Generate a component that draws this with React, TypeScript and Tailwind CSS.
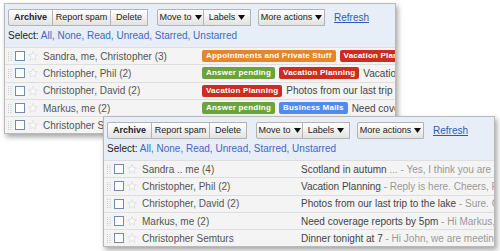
import React from "react";

type Label = { text: string; color: string };
type Row = {
  sender: string;
  labels?: Label[];
  subject?: string;
  snippet?: string;
};

const orange = "bg-[#e6852a]";
const red = "bg-[#cc2d20]";
const green = "bg-[#6aa43a]";
const blue = "bg-[#4d8df0]";

const labeledRows: Row[] = [
  {
    sender: "Sandra, me, Christopher (3)",
    labels: [
      { text: "Appointments and Private Stuff", color: orange },
      { text: "Vacation Planning", color: red },
    ],
  },
  {
    sender: "Christopher, Phil (2)",
    labels: [
      { text: "Answer pending", color: green },
      { text: "Vacation Planning", color: red },
    ],
    subject: "Vacation Planning",
    snippet: " - Reply is here. Cheers, Phil",
  },
  {
    sender: "Christopher, David (2)",
    labels: [{ text: "Vacation Planning", color: red }],
    subject: "Photos from our last trip to the lake",
    snippet: " - Sure. Cool pictures",
  },
  {
    sender: "Markus, me (2)",
    labels: [
      { text: "Answer pending", color: green },
      { text: "Business Mails", color: blue },
    ],
    subject: "Need coverage reports by 5pm",
    snippet: " - Hi Markus, sure",
  },
  { sender: "Christopher Semturs", subject: "Dinner tonight at 7" },
];

const plainRows: Row[] = [
  {
    sender: "Sandra .. me (4)",
    subject: "Scotland in autumn",
    snippet: " ... - Yes, I think you are right about the weather",
  },
  {
    sender: "Christopher, Phil (2)",
    subject: "Vacation Planning",
    snippet: " - Reply is here. Cheers, Phil",
  },
  {
    sender: "Christopher, David (2)",
    subject: "Photos from our last trip to the lake",
    snippet: " - Sure. Cool pictures",
  },
  {
    sender: "Markus, me (2)",
    subject: "Need coverage reports by 5pm",
    snippet: " - Hi Markus, sure thing",
  },
  {
    sender: "Christopher Semturs",
    subject: "Dinner tonight at 7",
    snippet: " - Hi John, we are meeting at the place",
  },
];

function Arrow() {
  return (
    <svg width="7" height="5" viewBox="0 0 7 5" className="ml-[3px] shrink-0">
      <polygon points="0,0 7,0 3.5,5" fill="#111" />
    </svg>
  );
}

function Btn({
  children,
  w,
  first,
  bold,
}: {
  children: React.ReactNode;
  w: string;
  first?: boolean;
  bold?: boolean;
}) {
  return (
    <div
      className={`flex h-[17px] shrink-0 items-center justify-center border border-[#b3b3b3] bg-linear-to-b from-white to-[#e2e2e2] text-[9px] whitespace-nowrap text-[#222] ${w} ${
        first ? "rounded-l-[2px]" : "-ml-px"
      } ${bold ? "font-bold" : ""}`}
    >
      {children}
    </div>
  );
}

function Toolbar() {
  return (
    <div className="bg-[#e8eef8] px-[3px] pt-[5px] pb-[4px]">
      <div className="flex items-center">
        <Btn w="w-[45px]" first bold>
          Archive
        </Btn>
        <Btn w="w-[59px]">Report spam</Btn>
        <Btn w="w-[38px]">Delete</Btn>
        <div className="w-[9px] shrink-0" />
        <Btn w="w-[47px]" first>
          Move to <Arrow />
        </Btn>
        <Btn w="w-[48px]">
          Labels <Arrow />
        </Btn>
        <div className="w-[7px] shrink-0" />
        <Btn w="w-[67px]" first>
          More actions <Arrow />
        </Btn>
        <span className="ml-[9px] text-[10px] text-[#2a5db0] underline">
          Refresh
        </span>
      </div>
      <div className="mt-[3px] h-[14px] text-[10px] leading-[14px] text-[#222]">
        Select:{" "}
        <span className="text-[#4268c2]">
          All, None, Read, Unread, Starred, Unstarred
        </span>
      </div>
    </div>
  );
}

function Handle() {
  return (
    <svg width="4" height="9" viewBox="0 0 4 9" className="mx-[3px] shrink-0">
      {[0, 2, 4, 6, 8].map((y) =>
        [0, 2.5].map((x) => (
          <rect key={`${x}-${y}`} x={x} y={y} width="1" height="1" fill="#c9c9c9" />
        ))
      )}
    </svg>
  );
}

function Star() {
  return (
    <svg width="10" height="10" viewBox="0 0 10 10" className="mx-[3px] shrink-0">
      <polygon
        points="5,0.6 6.3,3.6 9.5,3.8 7,5.9 7.8,9.2 5,7.4 2.2,9.2 3,5.9 0.5,3.8 3.7,3.6"
        fill="#fafafa"
        stroke="#dcdcdc"
        strokeWidth="0.8"
      />
    </svg>
  );
}

function MailRow({ row }: { row: Row }) {
  return (
    <div className="flex h-[17.3px] items-center overflow-hidden border-t border-[#dedede] bg-[#f4f4f4] text-[10px] whitespace-nowrap">
      <Handle />
      <div className="h-[10px] w-[10px] shrink-0 border border-[#6f8cb3] bg-white" />
      <Star />
      <div className="w-[161px] shrink-0 overflow-hidden pl-[2px] text-[#555]">
        {row.sender}
      </div>
      <div className="flex min-w-0 items-center gap-[4px]">
        {row.labels?.map((l) => (
          <span
            key={l.text}
            className={`flex h-[12px] shrink-0 items-center rounded-[2px] px-[4px] text-[8px] font-bold tracking-[0.2px] text-white ${l.color}`}
          >
            {l.text}
          </span>
        ))}
        {row.subject && (
          <span className="shrink-0 text-[#444]">
            {row.subject}
            {row.snippet && <span className="text-[#999]">{row.snippet}</span>}
          </span>
        )}
      </div>
    </div>
  );
}

function Panel({ rows, pos }: { rows: Row[]; pos: string }) {
  return (
    <div
      className={`absolute w-[392px] overflow-hidden border border-[#b9b9b9] bg-white shadow-[2px_3px_5px_rgba(0,0,0,0.35)] ${pos}`}
    >
      <Toolbar />
      {rows.map((r) => (
        <MailRow key={r.sender} row={r} />
      ))}
    </div>
  );
}

export default function App() {
  return (
    <div
      className="relative h-[251px] w-[500px] overflow-hidden bg-white"
      style={{ fontFamily: '"Liberation Sans", Arial, sans-serif' }}
    >
      <Panel rows={labeledRows} pos="left-[4px] top-[3px]" />
      <Panel rows={plainRows} pos="left-[103px] top-[116px]" />
    </div>
  );
}
